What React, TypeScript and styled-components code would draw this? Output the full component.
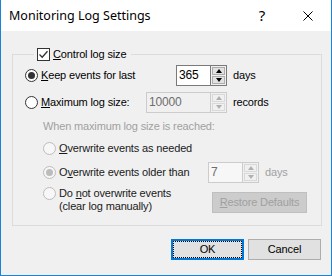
import React from "react";
import { styled, createGlobalStyle } from "styled-components";

const GlobalStyle = createGlobalStyle`
    html, body {
        margin: 0;
        padding: 0;
        background: #f0f0f0;
    }
    * {
        box-sizing: border-box;
    }
`;

const Window = styled.div`
    --accent: #1883d7;
    --face: #f0f0f0;
    --text: #000;
    --disabled: #a0a0a0;

    width: 332px;
    height: 276px;
    display: flex;
    flex-direction: column;
    border: 1px solid var(--accent);
    border-top: none;
    background: var(--face);
    font-family: "Liberation Sans", Arial, sans-serif;
    font-size: 11px;
    letter-spacing: -0.15px;
    line-height: 13px;
    color: var(--text);
`;

const TitleBar = styled.div`
    height: 31px;
    flex: none;
    display: flex;
    align-items: center;
    background: #fff;
    padding-left: 8px;
`;

const Title = styled.div`
    flex: 1;
    font-family: "Noto Sans", "Open Sans", sans-serif;
    font-size: 12.5px;
    letter-spacing: 0;
    color: #000;
`;

const TitleButton = styled.div`
    width: 46px;
    height: 31px;
    display: grid;
    place-items: center;
    font-family: "Noto Sans", sans-serif;
    font-size: 15px;
    &:first-of-type {
        padding-left: 5px;
    }
`;

const Body = styled.div`
    flex: 1;
    display: flex;
    flex-direction: column;
    padding: 17px 9px 0 11px;
`;

const GroupBox = styled.fieldset`
    margin: 0;
    padding: 0 0 12px 12px;
    border: 1px solid #dcdcdc;
    min-width: 0;
`;

const Legend = styled.legend`
    margin-left: 9px;
    padding: 0 5px 0 3px;
    display: flex;
    align-items: center;
    gap: 3px;
`;

const Key = styled.span`
    text-decoration: underline;
    text-underline-offset: 1px;
`;

const Box = styled.span`
    width: 13px;
    height: 13px;
    flex: none;
    border: 1px solid #333;
    background: #fff;
    display: grid;
    place-items: center;
`;

const Circle = styled.span<{ $on?: boolean; $off?: boolean }>`
    width: 13px;
    height: 13px;
    flex: none;
    border-radius: 50%;
    border: 1px solid ${(p) => (p.$off ? "#bcbcbc" : "#333")};
    background: ${(p) => (p.$off ? "#f7f7f7" : "#fff")};
    display: grid;
    place-items: center;
    &::after {
        content: "";
        width: 7px;
        height: 7px;
        border-radius: 50%;
        background: ${(p) => (p.$off ? "#bcbcbc" : "#333")};
        display: ${(p) => (p.$on ? "block" : "none")};
    }
`;

const Choice = styled.label`
    display: flex;
    align-items: flex-start;
    gap: 3px;
    white-space: nowrap;
`;

const MainGrid = styled.div`
    margin-top: 4px;
    display: grid;
    grid-template-columns: 115px 81px max-content;
    justify-content: start;
    column-gap: 6px;
    row-gap: 6px;
    align-items: center;
`;

const SpinBox = styled.div<{ $off?: boolean }>`
    justify-self: end;
    height: 21px;
    display: flex;
    border: 1px solid ${(p) => (p.$off ? "#cccccc" : "#7a7a7a")};
`;

const SpinInput = styled.div<{ $w: number; $bg: string; $off?: boolean }>`
    width: ${(p) => p.$w - 1}px;
    padding: 3px 0 0 2px;
    font-size: 12px;
    background: ${(p) => p.$bg};
    color: ${(p) => (p.$off ? "#6d6d6d" : "#000")};
    border-right: 1px solid ${(p) => (p.$off ? "#cccccc" : "#7a7a7a")};
`;

const SpinButtons = styled.div`
    width: 15px;
    display: flex;
    flex-direction: column;
    gap: 1px;
    padding: 1px;
    background: #f0f0f0;
`;

const SpinArrow = styled.div<{ $off?: boolean; $down?: boolean }>`
    flex: 1;
    display: grid;
    place-items: center;
    background: ${(p) => (p.$off ? "#f0f0f0" : "#e1e1e1")};
    border: 1px solid ${(p) => (p.$off ? "#d9d9d9" : "#adadad")};
    &::after {
        content: "";
        border-left: 3.5px solid transparent;
        border-right: 3.5px solid transparent;
        ${(p) => (p.$down ? "border-top" : "border-bottom")}: 4px solid
            ${(p) => (p.$off ? "#b0b0b0" : "#000")};
    }
`;

const Unit = styled.span<{ $off?: boolean }>`
    color: ${(p) => (p.$off ? "var(--disabled)" : "var(--text)")};
`;

const Sub = styled.div`
    margin: 7px 0 0 18px;
    display: flex;
    flex-direction: column;
`;

const Hint = styled.div`
    color: var(--disabled);
`;

const OptionRow = styled.div<{ $top: number; $label: number }>`
    margin-top: ${(p) => p.$top}px;
    display: grid;
    grid-template-columns: ${(p) => p.$label}px max-content max-content;
    justify-content: start;
    column-gap: 6px;
    align-items: center;
`;

const OptionText = styled.span`
    color: #1a1a1a;
    line-height: 13px;
`;

const Button = styled.div<{ $focus?: boolean; $off?: boolean }>`
    width: 73px;
    height: 21px;
    display: grid;
    place-items: center;
    white-space: nowrap;
    background: ${(p) => (p.$off ? "#cccccc" : "#e1e1e1")};
    border: ${(p) =>
        p.$focus ? "2px solid #0078d7" : p.$off ? "1px solid #bfbfbf" : "1px solid #adadad"};
    color: ${(p) => (p.$off ? "var(--disabled)" : "#000")};
    ${(p) => p.$focus && `outline: 1px dotted #000; outline-offset: -3px;`}
`;

const RestoreButton = styled(Button)`
    width: 95px;
    align-self: start;
    margin-top: 5px;
`;

const Footer = styled.div`
    margin-top: 13px;
    display: flex;
    justify-content: flex-end;
    gap: 4px;
    padding-right: 1px;
`;

function Spin({
    width,
    value,
    off,
    bg = "#fff",
}: {
    width: number;
    value: string;
    off?: boolean;
    bg?: string;
}) {
    return (
        <SpinBox $off={off}>
            <SpinInput $w={width} $bg={bg} $off={off}>
                {value}
            </SpinInput>
            <SpinButtons>
                <SpinArrow $off={off} />
                <SpinArrow $off={off} $down />
            </SpinButtons>
        </SpinBox>
    );
}

function Check() {
    return (
        <Box>
            <svg width="11" height="11" viewBox="0 0 11 11">
                <path d="M1.5 5.5 L4.2 8.2 L9.5 2.2" fill="none" stroke="#333" strokeWidth="1.3" />
            </svg>
        </Box>
    );
}

export default function App() {
    return (
        <>
            <GlobalStyle />
            <Window>
                <TitleBar>
                    <Title>Monitoring Log Settings</Title>
                    <TitleButton>?</TitleButton>
                    <TitleButton>
                        <svg width="10" height="10" viewBox="0 0 10 10">
                            <path d="M0.5 0.5 L9.5 9.5 M9.5 0.5 L0.5 9.5" stroke="#000" strokeWidth="1" />
                        </svg>
                    </TitleButton>
                </TitleBar>
                <Body>
                    <GroupBox>
                        <Legend>
                            <Check />
                            <span>
                                <Key>C</Key>ontrol log size
                            </span>
                        </Legend>
                        <MainGrid>
                            <Choice>
                                <Circle $on />
                                <span>
                                    <Key>K</Key>eep events for last
                                </span>
                            </Choice>
                            <Spin width={35} value="365" />
                            <Unit>days</Unit>
                            <Choice>
                                <Circle />
                                <span>
                                    <Key>M</Key>aximum log size:
                                </span>
                            </Choice>
                            <Spin width={65} value="10000" off bg="#f0f0f0" />
                            <Unit>records</Unit>
                        </MainGrid>
                        <Sub>
                            <Hint>When maximum log size is reached:</Hint>
                            <OptionRow $top={9} $label={165}>
                                <Choice>
                                    <Circle $off />
                                    <OptionText>
                                        <Key>O</Key>verwrite events as needed
                                    </OptionText>
                                </Choice>
                            </OptionRow>
                            <OptionRow $top={7} $label={159}>
                                <Choice>
                                    <Circle $on $off />
                                    <OptionText>
                                        O<Key>v</Key>erwrite events older than
                                    </OptionText>
                                </Choice>
                                <Spin width={35} value="7" off bg="#f7f7f7" />
                                <Unit $off>days</Unit>
                            </OptionRow>
                            <OptionRow $top={4} $label={163}>
                                <Choice>
                                    <Circle $off />
                                    <OptionText>
                                        Do <Key>n</Key>ot overwrite events
                                        <br />
                                        (clear log manually)
                                    </OptionText>
                                </Choice>
                                <RestoreButton $off>
                                    <span>
                                        <Key>R</Key>estore Defaults
                                    </span>
                                </RestoreButton>
                            </OptionRow>
                        </Sub>
                    </GroupBox>
                    <Footer>
                        <Button $focus>OK</Button>
                        <Button>Cancel</Button>
                    </Footer>
                </Body>
            </Window>
        </>
    );
}
